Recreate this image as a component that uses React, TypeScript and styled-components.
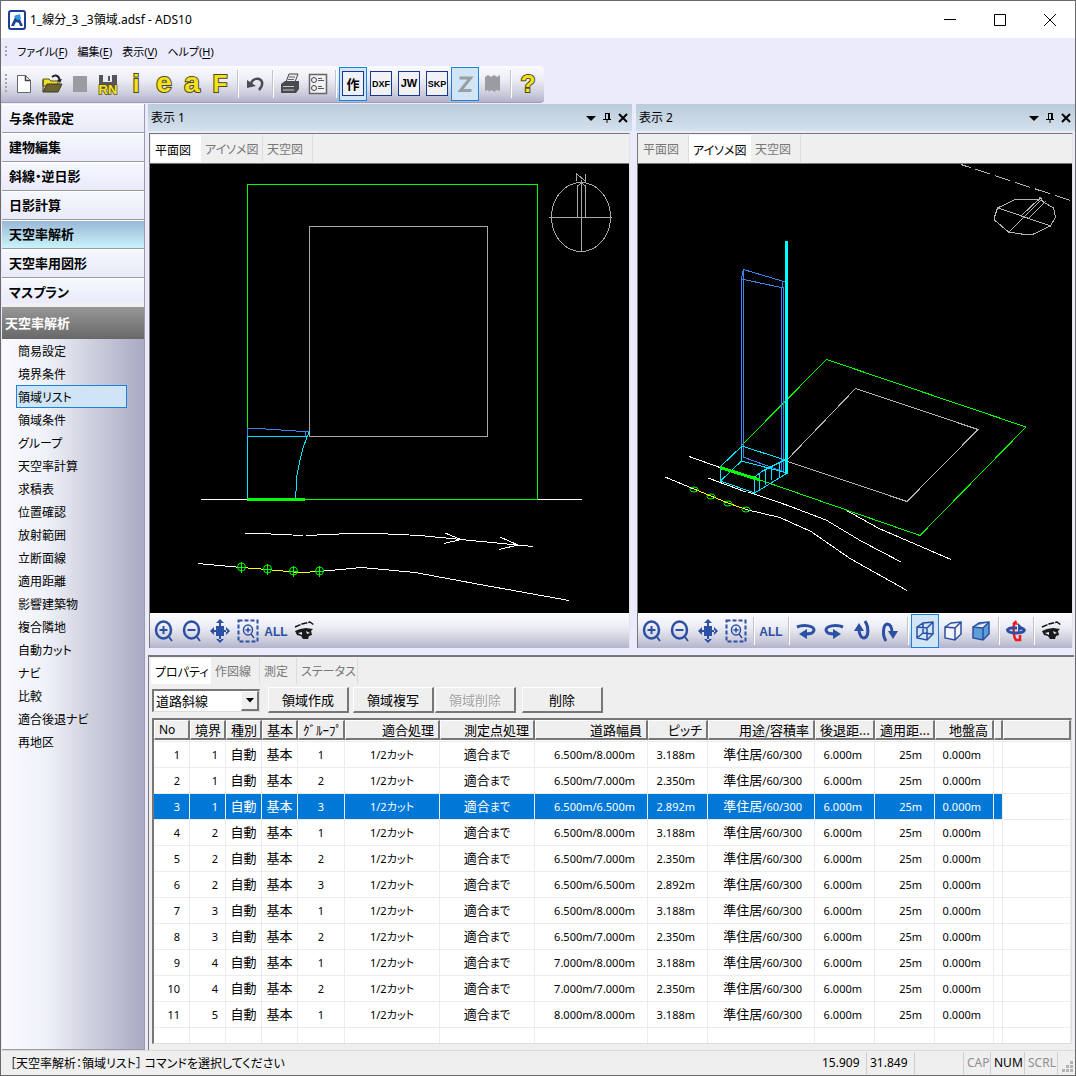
import React from "react";
import styled, { createGlobalStyle, css } from "styled-components";

const latin = '"Noto Sans", "Noto Sans CJK JP", sans-serif';
const kanji = '"Noto Sans CJK JP", "Noto Sans", sans-serif';
const steel = "linear-gradient(#fafaff 0%, #eeeff6 35%, #d2d3e0 70%, #b3b4cc 100%)";

const GlobalStyle = createGlobalStyle`
  * { box-sizing: border-box; }
  body { margin: 0; font-family: ${latin}; font-size: 12px; line-height: 16px; color: #000; font-feature-settings: "palt"; }
  button, select { font: inherit; font-feature-settings: inherit; color: inherit; margin: 0; padding: 0; border: 0; background: none; border-radius: 0; }
  svg { display: block; }
`;

/* ---------- window frame ---------- */

const Window = styled.div`
  display: flex;
  flex-direction: column;
  height: 100vh;
  min-height: 900px;
  border: 1px solid #6a6a6a;
  background: #ebebfc;
`;

const TitleBar = styled.header`
  display: flex;
  align-items: center;
  height: 37px;
  padding-left: 7px;
  background: #fff;
`;

const Title = styled.h1`
  flex: 1;
  margin: 0 0 0 4px;
  font-size: 12px;
  font-weight: 400;
`;

const WindowButton = styled.button`
  display: grid;
  place-items: center;
  width: 50px;
  height: 36px;
`;

const MenuBar = styled.nav`
  display: flex;
  align-items: center;
  gap: 10px;
  height: 28px;
  padding-left: 4px;
`;

const MenuItem = styled.button`
  white-space: nowrap;
  font-size: 11px;
  u { text-underline-offset: 2px; }
`;

const Grip = styled.span<{ $dots: number }>`
  width: 2px;
  height: ${(p) => p.$dots * 4}px;
  background: repeating-linear-gradient(#a3a3b5 0 2px, transparent 2px 4px);
`;

const ToolBar = styled.div`
  display: flex;
  align-items: center;
  align-self: flex-start;
  height: 37px;
  padding: 0 2px 0 4px;
  background: ${steel};
  border-bottom: 1px solid #a09cb8;
  border-radius: 0 4px 4px 0;
`;

const ToolButtons = styled.div`
  display: flex;
  align-items: center;
  margin-left: 3px;
`;

const Tool = styled.button<{ $on?: boolean }>`
  display: grid;
  place-items: center;
  width: 28px;
  height: 34px;
  ${(p) =>
    p.$on &&
    css`
      background: #d0e6f6;
      box-shadow: inset 0 0 0 1px #1a82dc;
    `}
`;

const Separator = styled.span`
  width: 7px;
  height: 28px;
  background: linear-gradient(90deg, transparent 3px, #c3c3cf 3px 4px, #fff 4px 5px, transparent 5px);
`;

const Body = styled.div`
  display: flex;
  flex: 1;
  min-height: 0;
  padding: 1px 0 0 1px;
`;

/* ---------- left navigation ---------- */

const SideBar = styled.aside`
  display: flex;
  flex-direction: column;
  flex: 0 0 143px;
  border-right: 1px solid #9c9ca8;
  border-bottom: 1px solid #9c9ca8;
`;

const Stages = styled.div`
  display: flex;
  flex-direction: column;
  padding-bottom: 4px;
  background: #f0f0f3;
`;

const Stage = styled.button<{ $on?: boolean }>`
  height: 29px;
  padding: 0 0 1px 7px;
  text-align: left;
  font-family: ${kanji};
  font-size: 13px;
  font-weight: 700;
  background: ${(p) => (p.$on ? "linear-gradient(#9bb8d6, #c9f4fb)" : "linear-gradient(#f5f8fd, #eaeafb)")};
  border-top: 1px solid #fff;
  border-bottom: 1px solid #9a9a9a;
  &:last-child { height: 25px; padding: 2px 0 0 7px; border-bottom: 0; }
`;

const SideHeading = styled.h2`
  display: flex;
  align-items: center;
  height: 32px;
  margin: 0;
  padding: 0 0 1px 3px;
  font-family: ${kanji};
  font-size: 13px;
  font-weight: 700;
  color: #fff;
  background: linear-gradient(#979797, #686868);
`;

const Commands = styled.div`
  display: flex;
  flex-direction: column;
  align-items: flex-start;
  flex: 1;
  padding-left: 14px;
  background: linear-gradient(90deg, #fafaff 0%, #f0f2fa 30%, #cfd0de 62%, #a9abc4 100%);
`;

const Command = styled.button<{ $on?: boolean }>`
  width: 111px;
  height: 23px;
  padding-left: 1px;
  text-align: left;
  font-family: ${kanji};
  border: 1px solid ${(p) => (p.$on ? "#1a82dc" : "transparent")};
  background: ${(p) => (p.$on ? "#cfe5f5" : "transparent")};
`;

/* ---------- view panes ---------- */

const Workspace = styled.main`
  display: flex;
  flex-direction: column;
  flex: 1;
  min-width: 0;
  gap: 7px;
  padding-left: 3px;
`;

const Views = styled.div`
  display: flex;
  flex: 1;
  min-height: 0;
  gap: 4px;
`;

const Pane = styled.section<{ $share: number }>`
  display: flex;
  flex-direction: column;
  flex: ${(p) => p.$share} 1 0;
  min-width: 0;
`;

const PaneHeading = styled.div`
  display: flex;
  align-items: center;
  height: 27px;
  margin-bottom: 2px;
  padding: 0 1px 0 3px;
  background: linear-gradient(#bccbd9, #d3e1ef);
`;

const PaneTitle = styled.h2`
  flex: 1;
  margin: 0;
  font-size: 12px;
  font-weight: 400;
`;

const PaneButton = styled.button`
  display: grid;
  place-items: center;
  width: 16px;
  height: 16px;
`;

const Frame = styled.div`
  display: flex;
  flex-direction: column;
  flex: 1;
  min-height: 0;
  margin: 0 2px 0 1px;
  border: solid #777;
  border-width: 1px 1px 0 1px;
  border-right-color: #e2e2e8;
  background: #efefef;
`;

const Tabs = styled.div`
  display: flex;
  height: 29px;
  padding: 1px 0 1px 1px;
`;

const Tab = styled.button<{ $on?: boolean; $width: number }>`
  width: ${(p) => p.$width}px;
  padding: ${(p) => (p.$on ? "2px 0 0 4px" : "0 0 0 4px")};
  text-align: left;
  white-space: nowrap;
  font-family: ${kanji};
  color: ${(p) => (p.$on ? "#000" : "#767676")};
  background: ${(p) => (p.$on ? "#fff" : "transparent")};
  border-right: 1px solid ${(p) => (p.$on ? "#fff" : "#dcdcdc")};
`;

const Canvas = styled.svg`
  flex: 1;
  min-height: 0;
  width: 100%;
  background: #000;
  border-top: 1px solid #777;
  shape-rendering: crispEdges;
  fill: none;
`;

const ViewTools = styled.div`
  display: flex;
  align-items: center;
  height: 35px;
  background: ${steel};
  border-top: 1px solid #fff;
`;

/* ---------- property pane ---------- */

const Properties = styled.section`
  display: flex;
  flex-direction: column;
  flex: 0 0 395px;
  min-height: 0;
  margin-right: 1px;
  padding: 0 2px 6px 3px;
  border: solid #777;
  border-width: 2px 0 0 1px;
  background: #efefef;
`;

const PropertyTabs = styled(Tabs)`
  height: 27px;
  margin-left: -1px;
  padding: 1px 0 0 0;
`;

const Controls = styled.div`
  display: flex;
  align-items: center;
  height: 26px;
  margin: 3px 0 5px;
`;

const PickerBox = styled.label`
  display: grid;
  grid-template-columns: 1fr 18px;
  width: 108px;
  height: 23px;
  margin-right: 8px;
  border: solid;
  border-width: 2px 1px 1px 2px;
  border-color: #777 #ddd #ddd #777;
  background: #fff;
`;

const Picker = styled.select`
  grid-area: 1 / 1 / 2 / 3;
  appearance: none;
  padding-left: 2px;
  font-family: ${kanji};
  font-size: 13px;
  background: #fff;
`;

const PickerArrow = styled.span`
  grid-area: 1 / 2;
  display: grid;
  place-items: center;
  pointer-events: none;
  background: #efefef;
  border: solid;
  border-width: 1px 2px 2px 1px;
  border-color: #fff #777 #777 #fff;
`;

const Push = styled.button<{ $gap: number }>`
  width: 81px;
  height: 26px;
  margin-right: ${(p) => p.$gap}px;
  font-family: ${kanji};
  font-size: 13px;
  background: #efefef;
  border: solid;
  border-width: 1px 2px 2px 1px;
  border-color: #fff #777 #777 #fff;
  &:disabled { color: #a3a3a3; text-shadow: 1px 1px #fff; }
`;

const ListBox = styled.div`
  flex: 1;
  min-height: 0;
  overflow: hidden;
  border: solid;
  border-width: 2px 1px 1px 2px;
  border-color: #777 #ddd #ddd #777;
  background: #fff;
`;

const Grid = styled.table`
  width: 100%;
  table-layout: fixed;
  border-collapse: separate;
  border-spacing: 0;
`;

const Head = styled.th<{ $left?: boolean }>`
  height: 20px;
  padding: 0 4px;
  overflow: hidden;
  white-space: nowrap;
  text-align: ${(p) => (p.$left ? "left" : "right")};
  font-family: ${(p) => (p.$left ? latin : kanji)};
  font-size: ${(p) => (p.$left ? 12 : 13)}px;
  font-weight: 400;
  background: #efefef;
  border: solid;
  border-width: 1px 2px 2px 1px;
  border-color: #fff #777 #777 #fff;
`;

const Row = styled.tr<{ $on?: boolean }>`
  ${(p) =>
    p.$on &&
    css`
      color: #fff;
      td:not(:last-child) { background: #0078d7; }
    `}
`;

const Cell = styled.td<{ $align?: "center" | "right"; $end?: number; $height?: number }>`
  height: ${(p) => p.$height ?? 26}px;
  padding: 0 ${(p) => p.$end ?? 0}px 0 0;
  overflow: hidden;
  white-space: nowrap;
  text-align: ${(p) => p.$align ?? "center"};
  font-size: 11px;
  border: solid #ececec;
  border-width: 0 1px 1px 0;
`;

const Kanji = styled.span`
  font-family: ${kanji};
  font-size: 13px;
`;

const Kana = styled.span`
  font-family: ${kanji};
  font-size: 11px;
`;

/* ---------- status bar ---------- */

const StatusBar = styled.footer`
  display: flex;
  align-items: center;
  height: 25px;
  padding: 0 1px 0 9px;
  background: #efefef;
  border-top: 1px solid #d9d9d9;
`;

const Message = styled.span`
  flex: 1;
  font-family: ${kanji};
`;

const Field = styled.span<{ $width: number; $dim?: boolean }>`
  width: ${(p) => p.$width}px;
  height: 22px;
  padding: 3px 0 0 3px;
  color: ${(p) => (p.$dim ? "#909090" : "#000")};
  border-right: 1px solid #cfcfcf;
`;

/* ---------- icons ---------- */

const blue = "#2b4fa2";

const Ico = ({ children, w = 24, h = 24 }: { children: React.ReactNode; w?: number; h?: number }) => (
  <svg width={w} height={h} viewBox={`0 0 ${w} ${h}`} fill="none" aria-hidden="true">
    {children}
  </svg>
);

const Letter = ({ text }: { text: string }) => (
  <Ico w={28} h={34}>
    <text x="14" y="25" textAnchor="middle" fontFamily="Liberation Sans, sans-serif" fontWeight="700"
      fontSize={text === "e" || text === "a" ? 28 : 24} fill="#f6e11c" stroke="#4a4622" strokeWidth="2" paintOrder="stroke">{text}</text>
  </Ico>
);

const Badge = ({ text }: { text: string }) => (
  <Ico w={22} h={26}>
    <rect x="0.5" y="0.5" width="21" height="24" fill="#f1f1f6" stroke="#17388f" />
    <text x="11" y={text === "作" ? 18 : 16} textAnchor="middle" fontFamily="Liberation Sans Narrow, Liberation Sans, Noto Sans CJK JP, sans-serif"
      fontWeight="700" fontSize={text === "作" ? 13 : text === "JW" ? 11 : 9} fill="#000">{text}</text>
  </Ico>
);

const icons: Record<string, React.ReactNode> = {
  new: <Ico><path d="M5.500 3.500h8l5 5v12h-13z" fill="#fff" stroke="#666" /><path d="M13.500 3.500v5h5" stroke="#444" strokeWidth="1.500" /></Ico>,
  open: (
    <Ico>
      <path d="M3 7h6l2 2h7v5H3z" fill="#f0dd2a" stroke="#55501c" />
      <path d="M12 5c3-2.500 7-2 7.500 3" stroke="#222" strokeWidth="2" /><path d="M17 8l3 3 2-4z" fill="#222" />
      <path d="M3 20l4-8h15l-4 8z" fill="#6c6430" stroke="#3b3820" /><path d="M3 8v12" stroke="#3b3820" />
    </Ico>
  ),
  gray: <Ico><path d="M5 4h14v16H5z" fill="#9c9ca0" /></Ico>,
  save: (
    <Ico w={28} h={30}>
      <path d="M5 6h18v13H5z" fill="#55555a" /><path d="M9 6h9v7H9z" fill="#ededf4" /><path d="M14 7h2v5h-2z" fill="#55555a" />
      <text x="14" y="25" textAnchor="middle" fontFamily="Liberation Sans, sans-serif" fontWeight="700" fontSize="13"
        fill="#f6e11c" stroke="#55501c" strokeWidth="1.500" paintOrder="stroke">RN</text>
    </Ico>
  ),
  undo: <Ico><path d="M8 12c1-6 9-7 11-2c1 4-1 6-3 8" stroke="#4a4a50" strokeWidth="2.500" /><path d="M4 8v8l9-2z" fill="#4a4a50" /></Ico>,
  print: (
    <Ico>
      <path d="M8 10l3-8h9l-3 8z" fill="#e9e9ee" stroke="#444" /><path d="M11 5h6M10 7.500h6" stroke="#666" />
      <path d="M3 12l4-3h14v8l-3 4H3z" fill="#4a4a4e" /><path d="M5 14.500h11M5 18h11" stroke="#c8c8cc" />
    </Ico>
  ),
  form: (
    <Ico>
      <path d="M3.500 2.500h17v19h-17z" fill="#f2f2f6" stroke="#666" strokeWidth="1.500" />
      <circle cx="8" cy="8" r="2.500" stroke="#444" /><circle cx="8" cy="16" r="2.500" stroke="#444" />
      <path d="M12 8.500h6M12 16.500h6M12 6.500h4M12 14.500h4" stroke="#555" />
    </Ico>
  ),
  z: <Ico><path d="M6.500 6h11L7.500 18.500h11" stroke="#9a9da2" strokeWidth="3" /></Ico>,
  book: <Ico><path d="M4 5l3-2 3 2 3-2 3 2 3-2v16l-4-1-1 2-4-2-2 2-1-2-3 1z" fill="#9c9ca0" /></Ico>,
  zoomIn: <Ico><ellipse cx="11.500" cy="11" rx="7.500" ry="8.500" stroke={blue} strokeWidth="2.500" /><path d="M7.500 11h8M11.500 7v8M17 18l3 4" stroke={blue} strokeWidth="2" /></Ico>,
  zoomOut: <Ico><ellipse cx="11.500" cy="11" rx="7.500" ry="8.500" stroke={blue} strokeWidth="2.500" /><path d="M7.500 11h8M17 18l3 4" stroke={blue} strokeWidth="2" /></Ico>,
  pan: (
    <Ico>
      <path d="M8 7h8v10H8z" fill={blue} />
      <path d="M12 0l4 4H8zM12 24l4-4H8zM2 12l4-4v8zM22 12l-4-4v8zM11 3h2v18h-2zM5 11h14v2H5z" fill={blue} />
    </Ico>
  ),
  region: (
    <Ico>
      <path d="M2.500 1.500h19v21h-19z" stroke={blue} strokeWidth="2" strokeDasharray="4 2" />
      <ellipse cx="12" cy="11" rx="4.500" ry="5" stroke={blue} strokeWidth="1.500" /><path d="M9.500 11h5M12 8.500v5M15 15l3 4" stroke={blue} strokeWidth="1.500" />
    </Ico>
  ),
  all: (
    <Ico>
      <text x="12" y="17" textAnchor="middle" fontFamily="Liberation Sans Narrow, Liberation Sans, sans-serif" fontWeight="700" fontSize="12" fill={blue}>ALL</text>
    </Ico>
  ),
  eye: (
    <Ico>
      <path d="M3 8l7-3 8-2 4 3" stroke="#111" strokeWidth="1.500" strokeDasharray="6 1" />
      <path d="M3 12l5-2 6-1 7 1-2 2 1 4-3 1-1 3h-5l-2-3-4-1z" fill="#1a1a1a" /><path d="M6 14l4-1v3zM14 12l4 2-3 1z" fill="#e6e6f0" />
    </Ico>
  ),
  rotRight: <Ico><path d="M3 8c7-3 17-1 17 3c0 3-4 4-9 4" stroke={blue} strokeWidth="3" /><path d="M13 10v10l-8-5z" fill={blue} /></Ico>,
  rotLeft: <Ico><path d="M21 8c-7-3-17-1-17 3c0 3 4 4 9 4" stroke={blue} strokeWidth="3" /><path d="M11 10v10l8-5z" fill={blue} /></Ico>,
  rotDown: <Ico><path d="M15 2c4 6 4 16-1 17c-3 0-5-4-5-9" stroke={blue} strokeWidth="3" /><path d="M4 12h10l-5-8z" fill={blue} /></Ico>,
  rotUp: <Ico><path d="M8 22c-4-6-3-16 1-17c4 0 5 4 5 9" stroke={blue} strokeWidth="3" /><path d="M10 12h10l-5 8z" fill={blue} /></Ico>,
  wire: <Ico><path d="M4 8l6-4 10-1v12l-6 6-10-2zM4 8l10 1 6-6M14 9v12M10 4v10l10 1M10 14l-6 5" stroke={blue} strokeWidth="1.500" /></Ico>,
  hidden: <Ico><path d="M4 8l6-4 10-1v12l-6 6-10-2zM4 8l10 1 6-6M14 9v12" stroke={blue} strokeWidth="1.500" fill="#f3f4fb" /></Ico>,
  solid: <Ico><path d="M4 8l6-4 10-1v12l-6 6-10-2zM4 8l10 1 6-6M14 9v12" stroke={blue} strokeWidth="1.500" fill="#5f9fd8" /></Ico>,
  orbit: (
    <Ico>
      <path d="M11 3c-2 3-2 14 1 18h4v-5" stroke="#f01818" strokeWidth="2.500" /><path d="M8 5l4-4 2 5z" fill="#f01818" />
      <path d="M16 9c7 1 5 5-4 5c-9 0-11-4-5-5h6" stroke={blue} strokeWidth="3" /><path d="M14 4v9l5-4z" fill={blue} />
    </Ico>
  ),
};

const ToolSet = ({ items, active = [] }: { items: string[]; active?: string[] }) => (
  <>
    {items.map((name, i) =>
      name === "|" ? (
        <Separator key={i} />
      ) : (
        <Tool key={i} type="button" aria-label={name} $on={active.includes(name)}>
          {icons[name] ?? (name.length === 1 && name !== "作" ? <Letter text={name} /> : <Badge text={name} />)}
        </Tool>
      )
    )}
  </>
);

const PaneBar = ({ title }: { title: string }) => (
  <PaneHeading>
    <PaneTitle>{title}</PaneTitle>
    <PaneButton type="button" aria-label="menu"><Ico w={12} h={12}><path d="M1 4h10l-5 5z" fill="#000" /></Ico></PaneButton>
    <PaneButton type="button" aria-label="pin"><Ico w={12} h={12}><path d="M4 1.500h5M4.500 1v6M2 7.500h8M6 7v4" stroke="#000" /><path d="M7 1h2v6H7z" fill="#000" /></Ico></PaneButton>
    <PaneButton type="button" aria-label="close"><Ico w={12} h={12}><path d="M2 2l8 8M10 2l-8 8" stroke="#000" strokeWidth="2" /></Ico></PaneButton>
  </PaneHeading>
);

/* ---------- drawings ---------- */

const PlanDrawing = () => (
  <Canvas viewBox="150 164 479 449" stroke="#fff">
    <g stroke="#a8a8a8">
      <path d="M309.500 226.500H487.500V436.500H309.500z" />
      <ellipse cx="581" cy="217" rx="29.500" ry="34.500" />
      <path d="M549 217.500h63M581.500 180v72M577.500 186v31M585.500 186v31M577.500 186l4-3 4 3M576.500 181v-7l9 7v-7" />
    </g>
    <path d="M201 499.500h46M537 499.500h45" />
    <path d="M247.500 184.500H537.500V499.500H247.500z" stroke="#0f0" />
    <path d="M247.500 436V428.500h11l45 3h6M305.500 431v5" stroke="#3c82f0" />
    <path d="M247.500 499V436.500H307M310 430l-3 7-4 11-3 12-3 15-1.500 24" stroke="#00e5ff" />
    <path d="M247 499.500h58" stroke="#0f0" strokeWidth="3" />
    <path d="M245 533.500h15l43 2M306 535.500l44-2h27l43 2 41 4 72 7M445 533l16 6.500-17 4M500 537l18 8-19 4.500" />
    <path d="M198 563.500l43 4M319 571.500l43-4 53 5 65 12 89 16" />
    <path d="M241 567.500l26 2 26 2.500h17l9-1" stroke="#ff0" />
    <g stroke="#0f0" shapeRendering="geometricPrecision">
      {[[241.5, 567], [267.5, 569], [293.5, 571], [319.5, 571]].map(([x, y]) => (
        <g key={x}>
          <circle cx={x} cy={y} r="4" />
          <path d={`M${x} ${y - 5}v11M${x - 4} ${y + 0.5}h8`} />
        </g>
      ))}
    </g>
  </Canvas>
);

const IsometricDrawing = () => (
  <Canvas viewBox="638 164 434 449" stroke="#fff">
    <g stroke="#b4b4b4">
      <path d="M961 164.500L1072 201" strokeDasharray="16 5" strokeDashoffset="6" />
      <path d="M994.500 217l3-9 19-9h22l15 9 2 9-5 9-17 8h-12l-13-2-14-12zM998 208l53 18M1009 232l32-32M1021 216l18-17M1029 218l16-16M1038 201l2-4 4 6 2-2" />
      <path d="M855.500 388.500L978 429.500 907 501.500 786 461z" />
    </g>
    <path d="M689 456.500l31 11M708 478l38 14M748 492l40 13.500 38 14.500 35 21 40 21M843 508.500l36 20 72 31M665 477l29 12M746 509.500l34 8 31 14 39 27 57 32" />
    <path d="M742 445L826.500 359.500 1026 427 920 535.500 760 480" stroke="#0f0" />
    <path d="M743.500 457V269.500L782 281l4 1M741.500 461V279l42 9M743.500 269l-2 10M782.500 281v7M783.500 288v185M781.500 288v183M743 457l41 15" stroke="#3c82f0" />
    <path d="M720.500 467v14l34 12 33-20-46-12-21 20M720 467l22-21 43 14M741.500 446v15M754.500 493v-16l8-6 22-11M759.500 473v17M765.500 470v15M771.500 466v14M779.500 462v15" stroke="#00e5ff" />
    <path d="M786.500 241v233" stroke="#0ff" strokeWidth="3" />
    <path d="M720 467.500l40 12.500" stroke="#0f0" strokeWidth="3" />
    <path d="M694 489l17 7 17 7 18 6.500" stroke="#ff0" />
    <g stroke="#0f0" shapeRendering="geometricPrecision">
      {[[694, 489.5], [711, 496.5], [728, 503.5], [746, 509.5]].map(([x, y]) => (
        <ellipse key={x} cx={x} cy={y} rx="4" ry="2.500" />
      ))}
    </g>
  </Canvas>
);

/* ---------- data ---------- */

const menus = [["ファイル", "F"], ["編集", "E"], ["表示", "V"], ["ヘルプ", "H"]];
const stages = ["与条件設定", "建物編集", "斜線・逆日影", "日影計算", "天空率解析", "天空率用図形", "マスプラン"];
const commands = ["簡易設定", "境界条件", "領域リスト", "領域条件", "グループ", "天空率計算", "求積表", "位置確認", "放射範囲",
  "立断面線", "適用距離", "影響建築物", "複合隣地", "自動カット", "ナビ", "比較", "適合後退ナビ", "再地区"];
const columns: [string, number][] = [["No", 36], ["境界", 36], ["種別", 36], ["基本", 36], ["ｸﾞﾙｰﾌﾟ", 47], ["適合処理", 95], ["測定点処理", 95],
  ["道路幅員", 113], ["ピッチ", 60], ["用途/容積率", 107], ["後退距...", 60], ["適用距...", 60], ["地盤高", 59], ["", 9]];
const rows = [
  [1, 1, "6.500m/8.000m", "3.188m"], [1, 2, "6.500m/7.000m", "2.350m"], [1, 3, "6.500m/6.500m", "2.892m"],
  [2, 1, "6.500m/8.000m", "3.188m"], [2, 2, "6.500m/7.000m", "2.350m"], [2, 3, "6.500m/6.500m", "2.892m"],
  [3, 1, "6.500m/8.000m", "3.188m"], [3, 2, "6.500m/7.000m", "2.350m"],
  [4, 1, "7.000m/8.000m", "3.188m"], [4, 2, "7.000m/7.000m", "2.350m"], [5, 1, "8.000m/8.000m", "3.188m"],
];

const EmptyRow = ({ height }: { height: number }) => (
  <Row>
    {[...columns, 0].map((_, i) => <Cell key={i} $height={height} />)}
  </Row>
);

export default function App() {
  return (
    <>
      <GlobalStyle />
      <Window>
        <TitleBar>
          <Ico w={18} h={20}>
            <rect x="1" y="1" width="16" height="18" rx="2" fill="#fff" stroke="#1b3f97" strokeWidth="2" />
            <path d="M3 16l5-11h2l5 11h-3l-1-3-3-1-2 4z" fill="#1d3f94" /><path d="M6 6l6-2 1 5-4 1z" fill="#2f9be0" />
          </Ico>
          <Title>1_線分_3 _3領域.adsf - ADS10</Title>
          <WindowButton type="button" aria-label="minimize"><Ico w={14} h={14}><path d="M1 6.500h12" stroke="#000" /></Ico></WindowButton>
          <WindowButton type="button" aria-label="maximize"><Ico w={14} h={14}><path d="M1.500 1.500h11v11h-11z" stroke="#000" /></Ico></WindowButton>
          <WindowButton type="button" aria-label="close"><Ico w={14} h={14}><path d="M1 1l12 12M13 1L1 13" stroke="#000" /></Ico></WindowButton>
        </TitleBar>
        <MenuBar>
          <Grip $dots={3} />
          {menus.map(([name, key]) => (
            <MenuItem type="button" key={key}>{name}(<u>{key}</u>)</MenuItem>
          ))}
        </MenuBar>
        <ToolBar>
          <Grip $dots={5} />
          <ToolButtons>
            <ToolSet
              items={["new", "open", "gray", "save", "i", "e", "a", "F", "|", "undo", "|", "print", "form", "|", "作", "DXF", "JW", "SKP", "z", "book", "|", "?"]}
              active={["作", "z"]}
            />
          </ToolButtons>
        </ToolBar>
        <Body>
          <SideBar>
            <Stages>
              {stages.map((s) => <Stage type="button" key={s} $on={s === "天空率解析"}>{s}</Stage>)}
            </Stages>
            <SideHeading>天空率解析</SideHeading>
            <Commands>
              {commands.map((c) => <Command type="button" key={c} $on={c === "領域リスト"}>{c}</Command>)}
            </Commands>
          </SideBar>
          <Workspace>
            <Views>
              <Pane $share={484}>
                <PaneBar title="表示 1" />
                <Frame>
                  <Tabs>
                    <Tab type="button" $on $width={50}>平面図</Tab>
                    <Tab type="button" $width={62}>アイソメ図</Tab>
                    <Tab type="button" $width={50}>天空図</Tab>
                  </Tabs>
                  <PlanDrawing />
                  <ViewTools><ToolSet items={["zoomIn", "zoomOut", "pan", "region", "all", "eye"]} /></ViewTools>
                </Frame>
              </Pane>
              <Pane $share={439}>
                <PaneBar title="表示 2" />
                <Frame>
                  <Tabs>
                    <Tab type="button" $width={50}>平面図</Tab>
                    <Tab type="button" $on $width={62}>アイソメ図</Tab>
                    <Tab type="button" $width={50}>天空図</Tab>
                  </Tabs>
                  <IsometricDrawing />
                  <ViewTools>
                    <ToolSet
                      items={["zoomIn", "zoomOut", "pan", "region", "|", "all", "|", "rotRight", "rotLeft", "rotDown", "rotUp", "|", "wire", "hidden", "solid", "|", "orbit", "|", "eye"]}
                      active={["wire"]}
                    />
                  </ViewTools>
                </Frame>
              </Pane>
            </Views>
            <Properties>
              <PropertyTabs>
                <Tab type="button" $on $width={60}>プロパティ</Tab>
                <Tab type="button" $width={49}>作図線</Tab>
                <Tab type="button" $width={37}>測定</Tab>
                <Tab type="button" $width={61}>ステータス</Tab>
              </PropertyTabs>
              <Controls>
                <PickerBox>
                  <Picker aria-label="斜線種別"><option>道路斜線</option></Picker>
                  <PickerArrow><Ico w={8} h={5}><path d="M0 0h8L4 4.500z" fill="#000" /></Ico></PickerArrow>
                </PickerBox>
                <Push type="button" $gap={4}>領域作成</Push>
                <Push type="button" $gap={1}>領域複写</Push>
                <Push type="button" $gap={6} disabled>領域削除</Push>
                <Push type="button" $gap={0}>削除</Push>
              </Controls>
              <ListBox>
                <Grid>
                  <colgroup>
                    {columns.map(([name, width]) => <col key={name} width={width} />)}
                    <col />
                  </colgroup>
                  <thead>
                    <tr>
                      {columns.map(([name]) => <Head key={name} $left={name === "No"}>{name}</Head>)}
                      <Head />
                    </tr>
                  </thead>
                  <tbody>
                    <EmptyRow height={2} />
                    {rows.map(([border, group, road, pitch], i) => (
                      <Row key={i} $on={i === 2}>
                        <Cell $align="right" $end={9}>{i + 1}</Cell>
                        <Cell $align="right" $end={7}>{border}</Cell>
                        <Cell><Kanji>自動</Kanji></Cell>
                        <Cell><Kanji>基本</Kanji></Cell>
                        <Cell>{group}</Cell>
                        <Cell>1/2<Kana>カット</Kana></Cell>
                        <Cell><Kanji>適合</Kanji><Kana>まで</Kana></Cell>
                        <Cell $align="right" $end={12}>{road}</Cell>
                        <Cell $align="right" $end={12}>{pitch}</Cell>
                        <Cell $align="right" $end={12}><Kanji>準住居</Kanji>/60/300</Cell>
                        <Cell $align="right" $end={12}>6.000m</Cell>
                        <Cell $align="right" $end={12}>25m</Cell>
                        <Cell $align="right" $end={12}>0.000m</Cell>
                        <Cell />
                        <Cell />
                      </Row>
                    ))}
                    <EmptyRow height={26} />
                  </tbody>
                </Grid>
              </ListBox>
            </Properties>
          </Workspace>
        </Body>
        <StatusBar>
          <Message>［天空率解析：領域リスト］ コマンドを選択してください</Message>
          <Field $width={48}>15.909</Field>
          <Field $width={48}>31.849</Field>
          <Field $width={49} />
          <Field $width={27} $dim>CAP</Field>
          <Field $width={34}>NUM</Field>
          <Field $width={33} $dim>SCRL</Field>
          <Ico w={16} h={20}><path d="M12 8h3v3h-3zM8 12h3v3H8zM12 12h3v3h-3zM4 16h3v3H4zM8 16h3v3H8zM12 16h3v3h-3z" fill="#b5b5b5" /></Ico>
        </StatusBar>
      </Window>
    </>
  );
}
